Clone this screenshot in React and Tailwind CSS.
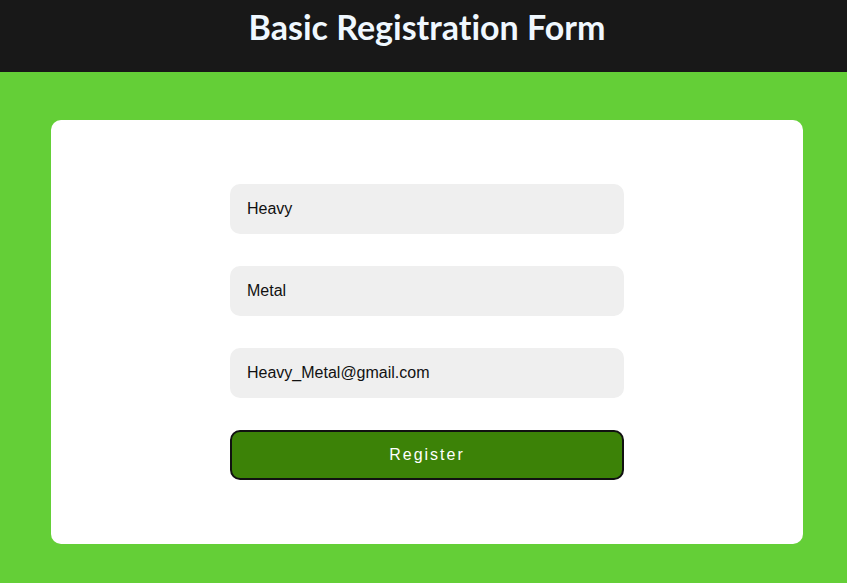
export default function App() {
  return (
    <div className="min-h-[583px] w-full bg-[#64cf37] flex flex-col" style={{ fontFamily: '"Liberation Sans", Arial, sans-serif' }}>
      <header className="h-[72px] bg-[#181818] flex justify-center pl-[7px]">
        <h1 className="mt-[7px] text-[34px] leading-[40px] font-bold text-[#f0f8ff] [font-variant-ligatures:none]" style={{ fontFamily: 'Lato, "Open Sans", sans-serif' }}>
          Basic Registration Form
        </h1>
      </header>
      <div className="pt-[48px] pl-[51px]">
        <div className="w-[752px] bg-white rounded-[10px] py-[64px] flex flex-col items-center gap-[32px]">
          {["Heavy", "Metal", "Heavy_Metal@gmail.com"].map((v) => (
            <div key={v} className="w-[394px] h-[50px] rounded-[10px] bg-[#efefef] flex items-center px-[17px] text-[16px] text-[#111]">
              {v}
            </div>
          ))}
          <button className="w-[394px] h-[50px] rounded-[10px] bg-[#3c8207] border-2 border-[#111] text-white text-[16px] tracking-[2px]">
            Register
          </button>
        </div>
      </div>
    </div>
  );
}
